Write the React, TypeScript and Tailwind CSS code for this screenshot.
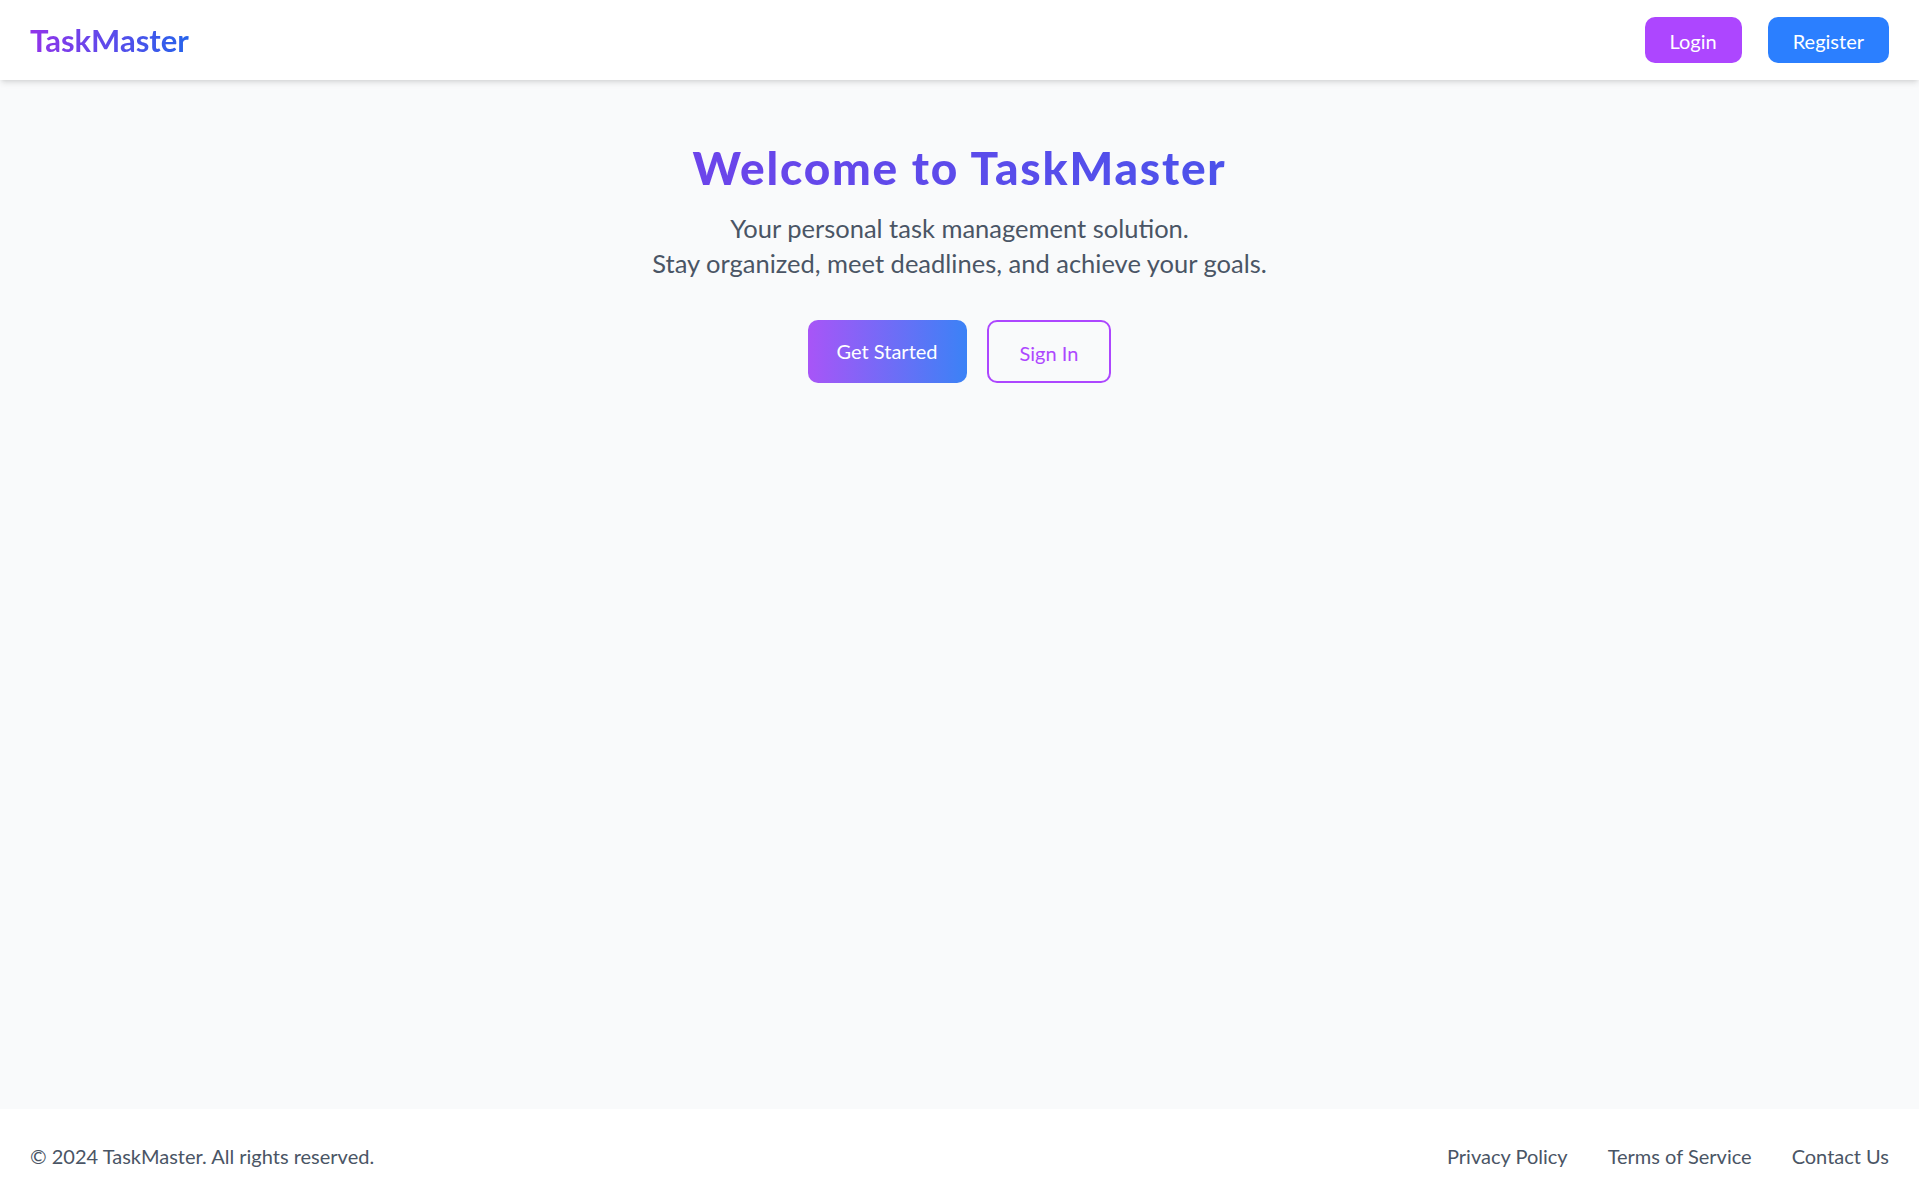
import React from 'react';

const App = () => {
  return (
    <div className="min-h-screen flex flex-col bg-gray-50 font-['Lato','Liberation_Sans',sans-serif]">
      <header className="bg-white shadow-md h-[80px] px-[30px] flex items-center justify-between relative z-10">
        <span className="text-[31px] leading-[36px] font-bold bg-[linear-gradient(to_right,#9333ea,#2563eb)] bg-clip-text text-transparent">
          TaskMaster
        </span>
        <nav className="flex items-center gap-[26px]">
          <button className="bg-purple-500 text-white text-[20px] leading-[30px] px-[25px] pt-[9px] pb-[7px] rounded-[10px]">Login</button>
          <button className="bg-blue-500 text-white text-[20px] leading-[30px] px-[25px] pt-[9px] pb-[7px] rounded-[10px]">Register</button>
        </nav>
      </header>

      <main className="flex-1 pt-[63px] px-[30px] text-center">
        <h1 className="text-[46px] leading-[50px] font-black tracking-[1.8px] bg-[linear-gradient(to_right,#9333ea,#2563eb)] bg-clip-text text-transparent">
          Welcome to TaskMaster
        </h1>
        <p className="mt-[18px] text-[25.5px] leading-[35px] text-gray-600">
          Your personal task management solution.
          <br />
          Stay organized, meet deadlines, and achieve your goals.
        </p>
        <div className="mt-[39px] flex justify-center gap-[20px]">
          <button className="bg-[linear-gradient(to_right,#a855f7,#3b82f6)] text-white text-[20px] leading-[31px] px-[29px] py-4 rounded-[10px]">
            Get Started
          </button>
          <button className="border-2 border-purple-500 text-purple-500 text-[20px] leading-[31px] px-[31px] pt-[16px] pb-[12px] rounded-[10px]">
            Sign In
          </button>
        </div>
      </main>

      <footer className="bg-white px-[30px] pt-[32px] pb-[28px] flex items-center justify-between text-[20px] leading-[30px] text-gray-600">
        <span>© 2024 TaskMaster. All rights reserved.</span>
        <div className="flex gap-[40px]">
          <a href="#">Privacy Policy</a>
          <a href="#">Terms of Service</a>
          <a href="#">Contact Us</a>
        </div>
      </footer>
    </div>
  );
};

export default App;
